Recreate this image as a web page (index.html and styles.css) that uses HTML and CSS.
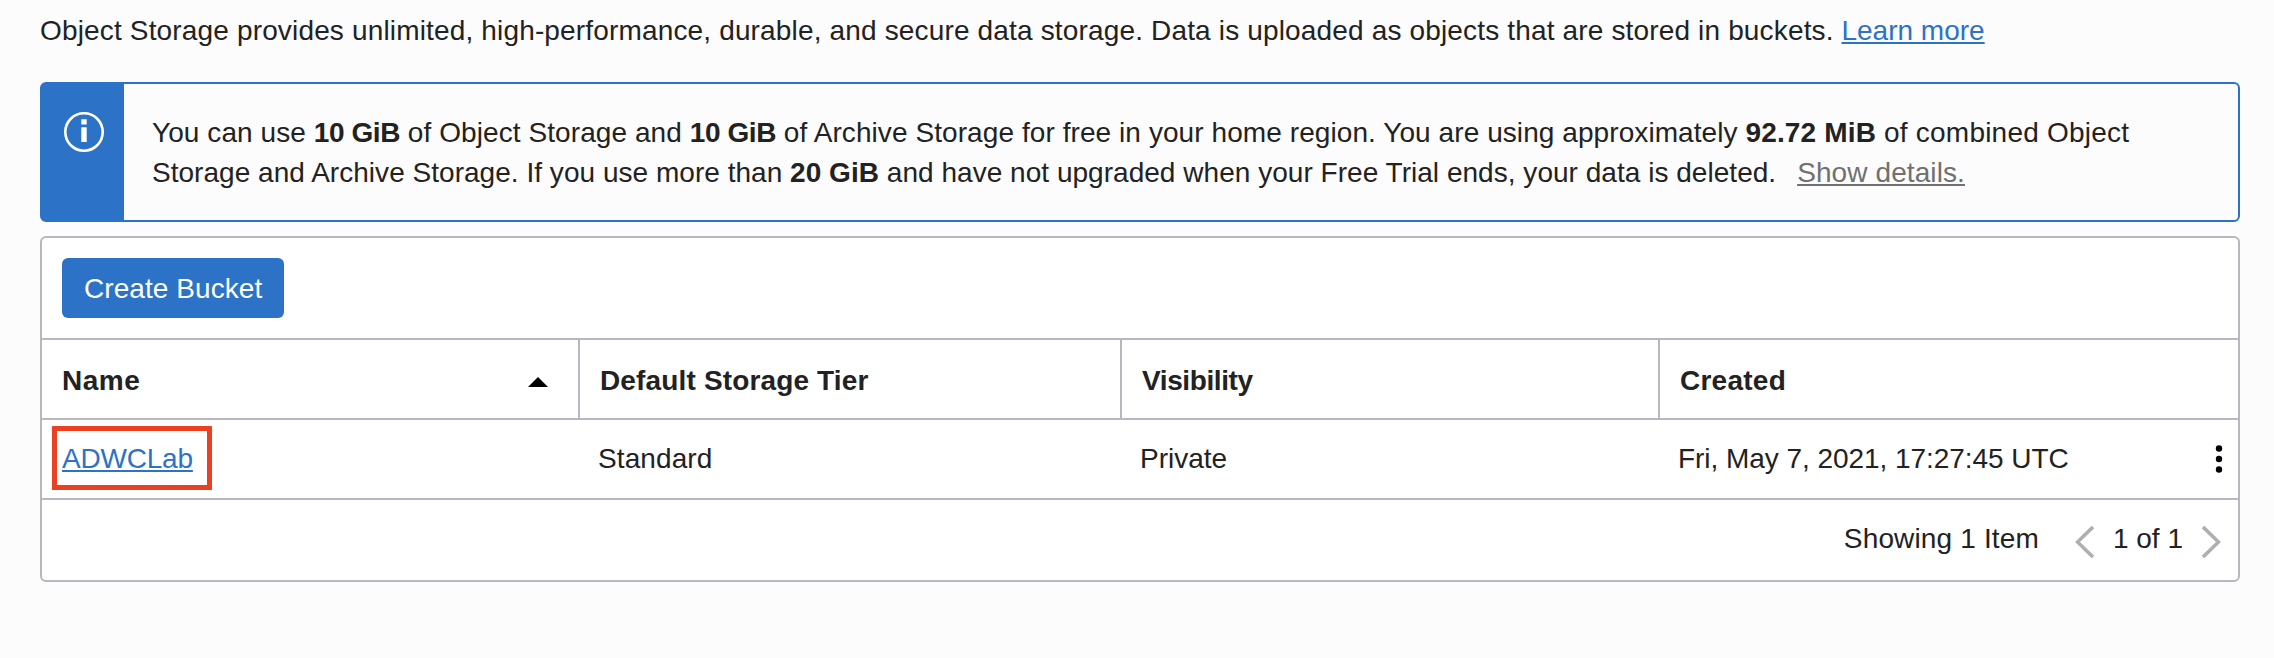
FILE: index.html
```html
<!DOCTYPE html>
<html lang="en">
<head>
<meta charset="utf-8">
<title>Object Storage Buckets</title>
<link rel="stylesheet" href="styles.css">
</head>
<body>
<main class="page">
  <p class="intro"><span class="intro-text">Object Storage provides unlimited, high-performance, durable, and secure data storage. Data is uploaded as objects that are stored in buckets.</span> <a class="link learn" href="#">Learn more</a></p>

  <section class="notice">
    <div class="notice-side">
      <svg class="info-icon" width="40" height="40" viewBox="0 0 40 40">
        <circle cx="20" cy="20" r="18.7" fill="none" stroke="#fff" stroke-width="2.6"/>
        <path d="M17.3 7.2h5.4v5.4h-5.4zM17.3 15.2h5.4v14.8h-5.4z" fill="#fff"/>
      </svg>
    </div>
    <div class="notice-body">
      <div class="line line-one">You can use <b>10 GiB</b> of Object Storage and <b>10 GiB</b> of Archive Storage for free in your home region. You are using approximately <b class="used">92.72 MiB</b><span class="tail"> of combined Object</span></div>
      <div class="line line-two"><span>Storage and Archive Storage. If you use more than <b>20 GiB</b> and have not upgraded when your Free Trial ends, your data is deleted.</span><a class="details" href="#">Show details.</a></div>
    </div>
  </section>

  <section class="panel">
    <div class="toolbar"><button class="create">Create Bucket</button></div>
    <div class="row head">
      <div class="cell"><span class="t-name">Name</span>
        <svg class="sort" width="20" height="10" viewBox="0 0 20 10"><path d="M10 0L20 10H0z" fill="#000"/></svg>
      </div>
      <div class="cell"><span class="t-tier">Default Storage Tier</span></div>
      <div class="cell"><span class="t-vis">Visibility</span></div>
      <div class="cell"><span class="t-created">Created</span></div>
    </div>
    <div class="row data">
      <div class="cell"><a class="link bucket" href="#">ADWCLab</a><span class="highlight"></span></div>
      <div class="cell"><span class="t-std">Standard</span></div>
      <div class="cell"><span class="t-priv">Private</span></div>
      <div class="cell"><span class="t-date">Fri, May 7, 2021, 17:27:45 UTC</span>
        <svg class="dots" width="8" height="30" viewBox="0 0 8 30"><circle cx="4" cy="4.5" r="3.2"/><circle cx="4" cy="15" r="3.2"/><circle cx="4" cy="25.5" r="3.2"/></svg>
      </div>
    </div>
    <div class="footer">
      <span class="count">Showing 1 Item</span>
      <svg class="chev prev" width="20" height="32" viewBox="0 0 20 32"><path d="M18 1L2.5 16L18 31"/></svg>
      <span class="pages">1 of 1</span>
      <svg class="chev next" width="20" height="32" viewBox="0 0 20 32"><path d="M2 1L17.5 16L2 31"/></svg>
    </div>
  </section>
</main>
</body>
</html>
```
FILE: styles.css
```css
* { box-sizing: border-box; }
body {
  margin: 0;
  background: #fcfcfc;
  color: #222;
  font: 28px/40px "Liberation Sans", Arial, sans-serif;
  white-space: nowrap;
}
.page { width: 2240px; padding: 11px 0 0 40px; }
.intro { margin: 0; height: 71px; }
.intro-text { letter-spacing: 0.158px; }
.link { color: #2c72c7; text-decoration: underline; text-decoration-thickness: 2px; text-underline-offset: 2px; text-decoration-skip-ink: none; }

.notice {
  display: flex;
  height: 140px;
  border: 2px solid #2c72c7;
  border-radius: 6px;
}
.notice-side { width: 82px; background: #2c72c7; padding: 28px 0 0 22px; }
.info-icon { display: block; }
.notice-body { padding: 29px 0 0 28px; }
.line { height: 40px; }
.line-one { letter-spacing: 0.078px; }
.line-one b { letter-spacing: -0.42px; }
.line-one .used { letter-spacing: 0.15px; }
.line-one .tail { letter-spacing: 0.22px; }
.line-two { letter-spacing: 0.03px; }
.details { margin-left: 21px; letter-spacing: 0.1px; color: #707070; text-decoration: underline; text-decoration-thickness: 2px; text-underline-offset: 2px; text-decoration-skip-ink: none; }

.panel {
  margin-top: 14px;
  height: 346px;
  background: #fff;
  border: 2px solid #b5b9bf;
  border-radius: 6px;
}
.toolbar { height: 102px; padding: 20px; border-bottom: 2px solid #b5b9bf; }
.create {
  display: block;
  width: 222px;
  height: 60px;
  padding: 1px 0 0 22px;
  border: 0;
  border-radius: 6px;
  background: #2c72c7;
  color: #fff;
  font: inherit;
  letter-spacing: 0.07px;
  text-align: left;
}
.row {
  display: grid;
  grid-template-columns: 536px 542px 538px 1fr;
  height: 80px;
  border-bottom: 2px solid #b5b9bf;
}
.cell { position: relative; display: flex; align-items: center; padding-left: 20px; }
.head { font-weight: bold; }
.head .cell { padding-top: 4px; }
.head .cell + .cell { border-left: 2px solid #b5b9bf; }
.head .cell:nth-child(1) { padding-right: 30px; justify-content: space-between; }
.sort { margin-top: 1px; }
.t-name { letter-spacing: 0.5px; }
.t-tier { letter-spacing: 0.15px; }
.t-vis { letter-spacing: -0.4px; }
.t-created { letter-spacing: 0.25px; }
.bucket { letter-spacing: -0.2px; }
.t-std { letter-spacing: 0.1px; }
.t-date { letter-spacing: -0.05px; }
.data .cell:nth-child(4) { padding-right: 15px; justify-content: space-between; }
.highlight {
  position: absolute;
  left: 9.5px;
  top: 6px;
  width: 160.5px;
  height: 64px;
  border: 5px solid #ec4022;
}
.dots { display: block; }
.footer {
  display: flex;
  align-items: center;
  justify-content: flex-end;
  height: 80px;
  padding-right: 17px;
}
.count { letter-spacing: 0.15px; }
.count, .pages { margin-top: -2px; }
.chev { fill: none; stroke: #afafaf; stroke-width: 3.6; }
.prev { margin: 4px 18px 0 36px; }
.next { margin: 4px 0 0 18px; }
```
